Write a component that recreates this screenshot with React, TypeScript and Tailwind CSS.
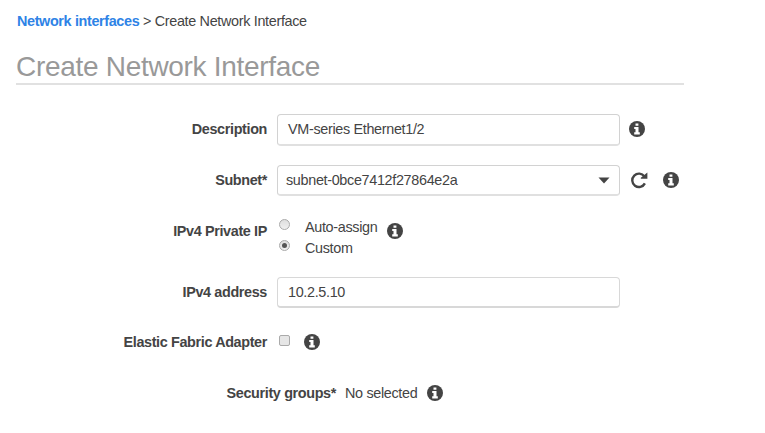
import React from "react";

function InfoIcon() {
  return (
    <svg viewBox="0 0 16 16" className="size-4 shrink-0" aria-label="Info">
      <circle cx="8" cy="8" r="8" fill="#444" />
      <path d="M6.5 2.5h2.9v2.3H6.5zM5.2 6h4.3v5.3h1.3v2.2H5.2v-2.2h1.3V8.1H5.2z" fill="#fff" />
    </svg>
  );
}

function RefreshIcon() {
  return (
    <svg viewBox="0 0 18 18" className="size-[18px] shrink-0" aria-label="Refresh">
      <path d="M14.4 5.4A6.7 6.7 0 1 0 14.9 12.4" fill="none" stroke="#444" strokeWidth="2.4" />
      <path d="M17.4 1.6v6.2h-6.6v-1z" fill="#444" />
    </svg>
  );
}

function Radio({ checked = false }: { checked?: boolean }) {
  return (
    <span className="flex size-[11px] shrink-0 items-center justify-center rounded-full border border-[#aaa] bg-linear-to-b from-[#dedede] to-[#f0f0f0]">
      {checked && <span className="size-[5px] rounded-full bg-[#555]" />}
    </span>
  );
}

function Row({ label, className, labelClass = "", children }: { label: React.ReactNode; className: string; labelClass?: string; children: React.ReactNode }) {
  return (
    <div className={`flex items-center ${className}`}>
      <div className={`mr-[10px] w-[267px] shrink-0 text-right font-bold tracking-[-0.36px] ${labelClass}`}>{label}</div>
      {children}
    </div>
  );
}

export default function App() {
  return (
    <main className="h-[433px] w-[765px] overflow-hidden bg-white font-['Liberation_Sans',Arial,sans-serif] text-[14.4px] leading-5 tracking-[-0.33px] whitespace-nowrap text-[#444]">
      <nav className="pt-[11px] pl-[17px]">
        <a className="font-bold tracking-[-0.36px] text-[#2e83e6]">Network interfaces</a> &gt; <span>Create Network Interface</span>
      </nav>
      <h1 className="mt-[19px] ml-4 h-[35px] w-[668px] border-b-2 border-[#e1e1e1] text-[28px] leading-[34px] tracking-[-0.3px] text-[#999]">
        Create Network Interface
      </h1>

      <Row label="Description" className="mt-[29px] h-8" labelClass="-mt-[2px]">
        <div className="h-8 w-[343px] rounded-[4px] border border-b-2 border-[#d2d2d2] border-b-[#e0e0e0] pl-[10px] leading-[28px]">VM-series Ethernet1/2</div>
        <div className="-mt-[2px] ml-[9px]"><InfoIcon /></div>
      </Row>
      <Row label="Subnet*" className="mt-[19px] h-[31px]" labelClass="-mt-[1px]">
        <div className="flex h-[31px] w-[343px] items-center justify-between rounded-[4px] border border-b-2 border-[#d2d2d2] border-b-[#e0e0e0] pr-[9px] pl-[8px]">
          <span className="-mt-[1px]">subnet-0bce7412f27864e2a</span>
          <svg viewBox="0 0 12 7" className="h-[7px] w-3 fill-[#444]"><path d="M.5.5h11L6 6.5z" /></svg>
        </div>
        <div className="-mt-[2px] ml-[10px] flex items-center gap-[15px]"><RefreshIcon /><InfoIcon /></div>
      </Row>
      <Row label="IPv4 Private IP" className="mt-5 h-[42px]" labelClass="-mt-[12px]">
        <div className="flex flex-col">
          <label className="flex h-[21px] items-center"><span className="-mt-[5px] mr-[15px] ml-[2px]"><Radio /></span>Auto-assign</label>
          <label className="flex h-[21px] items-center"><span className="-mt-[5px] mr-[15px] ml-[2px]"><Radio checked /></span>Custom</label>
        </div>
        <div className="-mt-[12px] ml-[10px]"><InfoIcon /></div>
      </Row>
      <Row label="IPv4 address" className="mt-[19px] h-[31px]" labelClass="-mt-[1px]">
        <div className="h-[31px] w-[343px] rounded-[4px] border border-b-2 border-[#d8d8d8] pl-[10px] leading-[28px]">10.2.5.10</div>
      </Row>
      <Row label="Elastic Fabric Adapter" className="mt-[24px] h-5">
        <span className="-mt-[3px] ml-[2px] size-[11px] rounded-[2px] border border-[#aaa] bg-[#e6e6e6]" />
        <div className="ml-[14px]"><InfoIcon /></div>
      </Row>
      <div className="mt-[31px] flex h-5 items-center">
        <div className="w-[336px] text-right font-bold tracking-[-0.36px]">Security groups*</div>
        <span className="ml-[9px]">No selected</span>
        <div className="ml-[10px]"><InfoIcon /></div>
      </div>
    </main>
  );
}
